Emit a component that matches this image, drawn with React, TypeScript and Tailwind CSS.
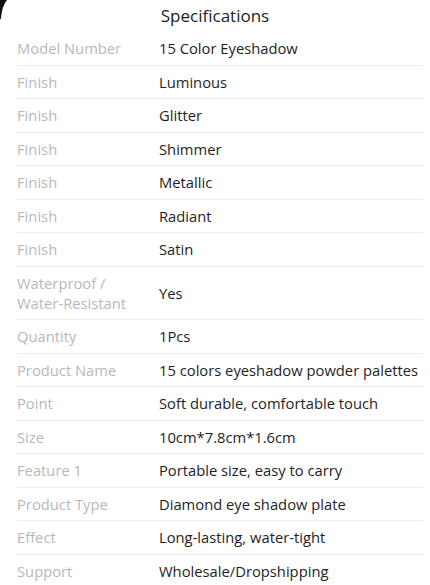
const specs: [string, string][] = [
  ["Model Number", "15 Color Eyeshadow"],
  ["Finish", "Luminous"],
  ["Finish", "Glitter"],
  ["Finish", "Shimmer"],
  ["Finish", "Metallic"],
  ["Finish", "Radiant"],
  ["Finish", "Satin"],
  ["Waterproof / Water-Resistant", "Yes"],
  ["Quantity", "1Pcs"],
  ["Product Name", "15 colors eyeshadow powder palettes"],
  ["Point", "Soft durable, comfortable touch"],
  ["Size", "10cm*7.8cm*1.6cm"],
  ["Feature 1", "Portable size, easy to carry"],
  ["Product Type", "Diamond eye shadow plate"],
  ["Effect", "Long-lasting, water-tight"],
  ["Support", "Wholesale/Dropshipping"],
];

export default function App() {
  return (
    <div className="relative h-[585px] w-[430px] overflow-hidden bg-white font-['Open_Sans',sans-serif]">
      {/* phone frame corner */}
      <svg className="absolute left-0 top-0" width="8" height="20" viewBox="0 0 8 20">
        <path d="M0 0 H7 Q2 6 1 18 L0 20 Z" fill="#111" />
      </svg>

      <h2 className="h-[32px] pt-[4px] text-center text-[17px] leading-6 text-[#222]">
        Specifications
      </h2>

      <div className="pl-[17px] pr-[7px]">
        {specs.map(([label, value], i) => (
          <div
            key={i}
            className="flex items-center border-b border-[#ececec] py-[6.25px] text-[14.75px] leading-5 last:border-b-0"
          >
            <div className="w-[142px] shrink-0 pr-[24px] text-[#b8b8b8]">{label}</div>
            <div className="whitespace-nowrap text-[#1e1e1e]">{value}</div>
          </div>
        ))}
      </div>
    </div>
  );
}
